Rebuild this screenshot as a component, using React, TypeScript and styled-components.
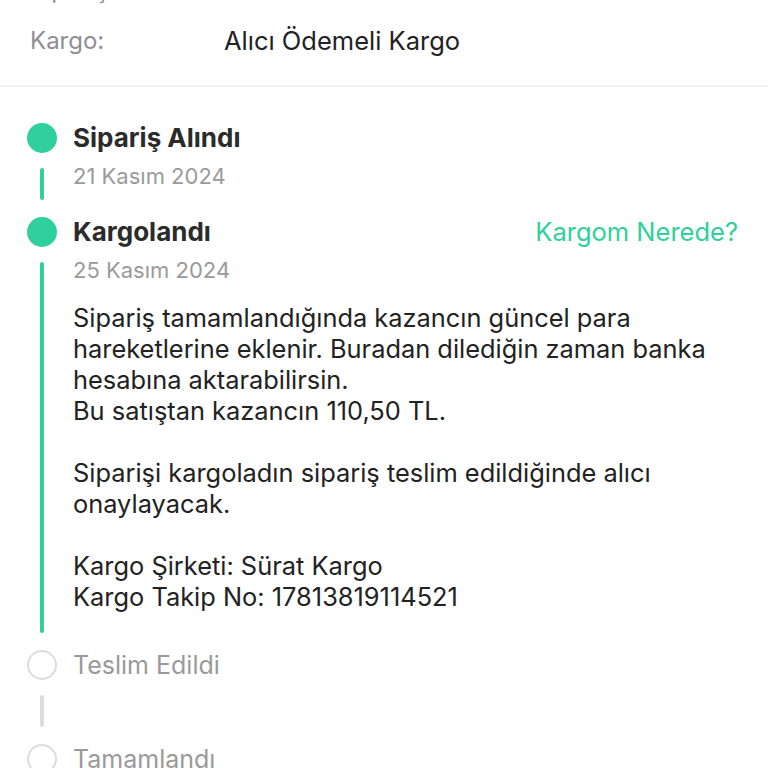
import React from "react";
import styled, { createGlobalStyle } from "styled-components";

const GlobalStyle = createGlobalStyle`
  html, body {
    margin: 0;
    padding: 0;
    background: #ffffff;
    overflow: hidden;
  }
  body {
    font-family: Inter, "Noto Sans", "Liberation Sans", sans-serif;
    -webkit-font-smoothing: antialiased;
  }
`;

const GREEN = "#2fd09b";

type StepData = {
  title: string;
  date?: string;
  done: boolean;
  action?: string;
  body?: string[][];
};

const steps: StepData[] = [
  { title: "Sipariş Alındı", date: "21 Kasım 2024", done: true },
  {
    title: "Kargolandı",
    date: "25 Kasım 2024",
    done: true,
    action: "Kargom Nerede?",
    body: [
      [
        "Sipariş tamamlandığında kazancın güncel para",
        "hareketlerine eklenir. Buradan dilediğin zaman banka",
        "hesabına aktarabilirsin.",
        "Bu satıştan kazancın 110,50 TL.",
      ],
      ["Siparişi kargoladın sipariş teslim edildiğinde alıcı", "onaylayacak."],
      ["Kargo Şirketi: Sürat Kargo", "Kargo Takip No: 17813819114521"],
    ],
  },
  { title: "Teslim Edildi", done: false },
  { title: "Tamamlandı", done: false },
];

const App: React.FC = () => {
  return (
    <>
      <GlobalStyle />
      <Page>
        <InfoBlock>
          <InfoRow>
            <InfoLabel>Sipariş No:</InfoLabel>
            <InfoValue>2411219083</InfoValue>
          </InfoRow>
          <InfoRow>
            <InfoLabel>Kargo:</InfoLabel>
            <InfoValue>Alıcı Ödemeli Kargo</InfoValue>
          </InfoRow>
        </InfoBlock>
        <Divider />
        <Timeline>
          {steps.map((step, i) => {
            const isLast = i === steps.length - 1;
            return (
              <Step key={step.title}>
                <Marker>
                  <Dot $done={step.done} />
                  {!isLast && <Line $done={step.done} />}
                </Marker>
                <StepContent>
                  <TitleRow>
                    <StepTitle $done={step.done}>{step.title}</StepTitle>
                    {step.action && <ActionLink>{step.action}</ActionLink>}
                  </TitleRow>
                  {step.date && <StepDate>{step.date}</StepDate>}
                  {step.body && (
                    <Body>
                      {step.body.map((para, p) => (
                        <Paragraph key={p}>
                          {para.map((line) => (
                            <div key={line}>{line}</div>
                          ))}
                        </Paragraph>
                      ))}
                    </Body>
                  )}
                </StepContent>
              </Step>
            );
          })}
        </Timeline>
      </Page>
    </>
  );
};

const Page = styled.div`
  width: 768px;
  height: 768px;
  overflow: hidden;
  background: #fff;
`;

const InfoBlock = styled.div`
  display: flex;
  flex-direction: column;
  gap: 21px;
  margin-top: -25px;
  padding: 0 30px 29px;
`;

const InfoRow = styled.div`
  display: grid;
  grid-template-columns: 194px 1fr;
  align-items: center;
  height: 30px;
  font-size: 24px;
  line-height: 30px;
  white-space: nowrap;
`;

const InfoLabel = styled.span`
  color: #8e8e93;
`;

const InfoValue = styled.span`
  color: #222;
  font-size: 25.5px;
`;

const Divider = styled.div`
  height: 2px;
  background: #f2f2f4;
`;

const Timeline = styled.div`
  display: flex;
  flex-direction: column;
  padding: 36px 30px 0 27px;
`;

const Step = styled.div`
  display: flex;
  gap: 16px;
`;

const Marker = styled.div`
  width: 30px;
  flex-shrink: 0;
  display: flex;
  flex-direction: column;
  align-items: center;
`;

const Dot = styled.div<{ $done: boolean }>`
  width: 30px;
  height: 30px;
  box-sizing: border-box;
  border-radius: 50%;
  flex-shrink: 0;
  background: ${(p) => (p.$done ? GREEN : "#fff")};
  border: ${(p) => (p.$done ? "none" : "2.5px solid #dcdcdc")};
`;

const Line = styled.div<{ $done: boolean }>`
  width: 4px;
  flex: 1;
  min-height: 32px;
  margin: 15px 0 17px;
  border-radius: 2px;
  background: ${(p) => (p.$done ? GREEN : "#dcdcdc")};
`;

const StepContent = styled.div`
  flex: 1;
  min-width: 0;
  padding-bottom: 26px;
`;

const TitleRow = styled.div`
  display: flex;
  justify-content: space-between;
  align-items: center;
  height: 30px;
`;

const StepTitle = styled.div<{ $done: boolean }>`
  font-size: ${(p) => (p.$done ? "26px" : "25px")};
  line-height: 30px;
  font-weight: ${(p) => (p.$done ? 700 : 400)};
  color: ${(p) => (p.$done ? "#2b2b2b" : "#9a9a9a")};
`;

const ActionLink = styled.div`
  font-size: 25.5px;
  line-height: 30px;
  color: ${GREEN};
`;

const StepDate = styled.div`
  margin-top: 8px;
  font-size: 22px;
  line-height: 30px;
  color: #9a9a9a;
`;

const Body = styled.div`
  margin-top: 17px;
  margin-bottom: 12px;
  display: flex;
  flex-direction: column;
  gap: 31px;
  font-size: 25.4px;
  line-height: 31px;
  color: #222;
  white-space: nowrap;
`;

const Paragraph = styled.div``;

export default App;
